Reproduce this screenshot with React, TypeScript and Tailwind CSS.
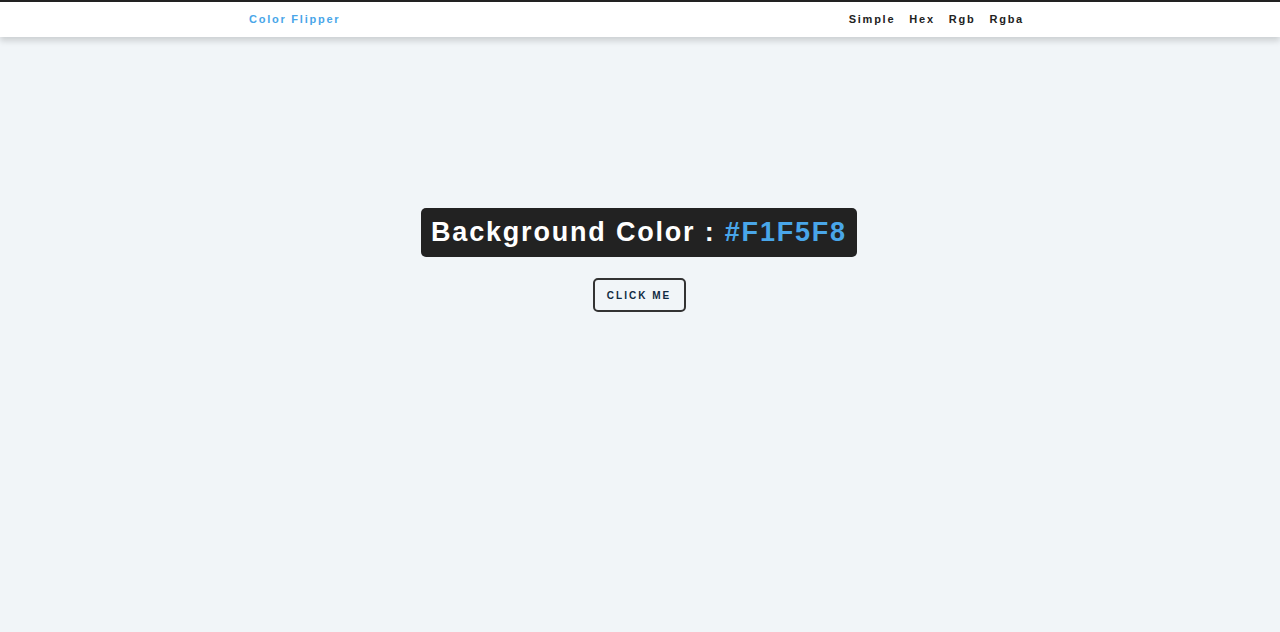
export default function App() {
  return (
    <div className="min-h-screen bg-[#f1f5f8] font-['Liberation_Sans',Arial,sans-serif]">
      <nav className="border-t-2 border-[#222] bg-white shadow-[0_4px_6px_rgba(0,0,0,0.15)]">
        <div className="ml-[249px] flex h-[35px] w-[775px] items-center justify-between">
          <h4 className="text-[11px] font-bold tracking-[0.16em] text-[#49a6e9]">Color Flipper</h4>
          <ul className="flex gap-[14px] text-[11px] font-bold tracking-[0.16em] text-[#222]">
            <li>Simple</li>
            <li>Hex</li>
            <li>Rgb</li>
            <li>Rgba</li>
          </ul>
        </div>
      </nav>
      <main className="flex flex-col items-center pr-[2px] pt-[171px]">
        <h2 className="rounded-[5px] bg-[#222] px-[10px] py-[7px] text-[27px] font-bold leading-[35px] tracking-[1.8px] text-white">
          Background Color : <span className="text-[#49a6e9]">#F1F5F8</span>
        </h2>
        <button className="mt-[21px] h-[34px] w-[93px] rounded-[5px] border-2 border-[#333] text-[10px] font-bold tracking-[0.2em] text-[#102a42]">
          CLICK ME
        </button>
      </main>
    </div>
  );
}
